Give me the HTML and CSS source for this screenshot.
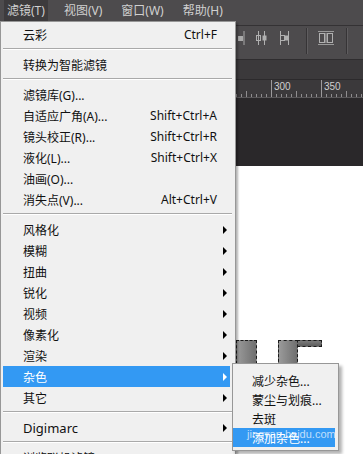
FILE: index.html
```html
<!DOCTYPE html>
<html lang="zh-CN">
<head>
  <meta charset="UTF-8">
  <title>滤镜菜单</title>
  <link rel="stylesheet" href="styles.css">
</head>
<body>
  <div class="app">
    <div class="menubar">
      <span class="mb-item active">滤镜(T)</span>
      <span class="mb-item">视图(V)</span>
      <span class="mb-item">窗口(W)</span>
      <span class="mb-item">帮助(H)</span>
    </div>

    <div class="optionsbar">
      <div class="spacer"></div>
      <svg class="tool" width="8" height="14" viewBox="0 0 8 14"><path d="M7 0v14" stroke="#a9a9a9"/><rect x="1" y="5" width="5" height="5" fill="#a9a9a9"/></svg>
      <svg class="tool" width="13" height="14" viewBox="0 0 13 14"><path d="M3.5 0v14M9.5 0v14" stroke="#b0b0b0"/><rect x="1.5" y="4.5" width="4" height="5" fill="none" stroke="#b0b0b0"/><rect x="7.5" y="4.5" width="4" height="5" fill="#b0b0b0"/></svg>
      <svg class="tool" width="13" height="14" viewBox="0 0 13 14"><path d="M2.5 0v14M10.5 0v14" stroke="#b0b0b0"/><rect x="2.5" y="4.5" width="4" height="5" fill="none" stroke="#b0b0b0"/><rect x="6.5" y="4.5" width="4" height="5" fill="#b0b0b0"/></svg>
      <span class="divider"></span>
      <svg class="tool" width="16" height="14" viewBox="0 0 16 14"><path d="M0 .5h16M0 13.5h16" stroke="#9a9a9a"/><rect x="1.5" y="2.5" width="5" height="9" fill="none" stroke="#b0b0b0"/><rect x="9.5" y="2.5" width="5" height="9" fill="none" stroke="#b0b0b0"/><path d="M8 2v10" stroke="#b0b0b0"/></svg>
      <span class="divider wide"></span>
    </div>

    <div class="tabbar"></div>

    <!-- só os números à direita do menu ficam visíveis -->
    <div class="ruler">
      <span class="seg"></span>
      <span class="seg"></span>
      <span class="seg"></span>
      <span class="seg"></span>
      <span class="seg"></span>
      <span class="seg">300</span>
      <span class="seg">350</span>
    </div>

    <div class="pasteboard"></div>

    <div class="document">
      <div class="shape s1"></div>
      <div class="shape s2"></div>
      <div class="shape s3"></div>
    </div>

    <div class="menu">
      <div class="item"><span>云彩</span><span class="key">Ctrl+F</span></div>
      <div class="sep"></div>
      <div class="item"><span>转换为智能滤镜</span></div>
      <div class="sep"></div>
      <div class="item"><span>滤镜库(G)...</span></div>
      <div class="item"><span>自适应广角(A)...</span><span class="key">Shift+Ctrl+A</span></div>
      <div class="item"><span>镜头校正(R)...</span><span class="key">Shift+Ctrl+R</span></div>
      <div class="item"><span>液化(L)...</span><span class="key">Shift+Ctrl+X</span></div>
      <div class="item"><span>油画(O)...</span></div>
      <div class="item"><span>消失点(V)...</span><span class="key">Alt+Ctrl+V</span></div>
      <div class="sep"></div>
      <div class="item sub"><span>风格化</span><i class="arrow"></i></div>
      <div class="item sub"><span>模糊</span><i class="arrow"></i></div>
      <div class="item sub"><span>扭曲</span><i class="arrow"></i></div>
      <div class="item sub"><span>锐化</span><i class="arrow"></i></div>
      <div class="item sub"><span>视频</span><i class="arrow"></i></div>
      <div class="item sub"><span>像素化</span><i class="arrow"></i></div>
      <div class="item sub"><span>渲染</span><i class="arrow"></i></div>
      <div class="item sub hover"><span>杂色</span><i class="arrow"></i></div>
      <div class="item sub"><span>其它</span><i class="arrow"></i></div>
      <div class="sep"></div>
      <div class="item sub"><span class="latin">Digimarc</span><i class="arrow"></i></div>
      <div class="sep"></div>
      <div class="item"><span>浏览联机滤镜...</span></div>
    </div>

    <div class="submenu">
      <div class="item"><span>减少杂色...</span></div>
      <div class="item"><span>蒙尘与划痕...</span></div>
      <div class="item"><span>去斑</span></div>
      <div class="item hover"><span>添加杂色...</span></div>
    </div>

    <div class="watermark">jingyan.baidu.com</div>
  </div>
</body>
</html>
```

FILE: styles.css
```css
* {
  box-sizing: border-box;
}

body {
  margin: 0;
  font-family: "Noto Sans", "Noto Sans CJK SC", sans-serif;
  font-size: 12px;
  background-color: #ffffff;
  overflow: hidden;
}

.app {
  position: relative;
  width: 363px;
  height: 454px;
  overflow: hidden;
  display: flex;
  flex-direction: column;
}

/* barra de menus do Photoshop */
.menubar {
  height: 26px;
  background-color: #4d4b4d;
  border-bottom: 1px solid #343234;
  display: flex;
  align-items: flex-start;
  gap: 13px;
  padding-left: 4px;
  color: #d0d0d0;
}

.mb-item {
  height: 21px;
  line-height: 21px;
  padding: 0 3px;
}

.mb-item.active {
  background-color: #3d3b3d;
}

.optionsbar {
  height: 34px;
  background-color: #4d4b4d;
  border-bottom: 1px solid #2f2d2f;
  display: flex;
  align-items: flex-start;
  padding-top: 5px;
}

.spacer {
  width: 237px;
}

.tool {
  margin-right: 10px;
}

.divider {
  width: 2px;
  height: 26px;
  margin: -3px 10px 0 5px;
  border-left: 1px solid #363436;
  border-right: 1px solid #5f5d5f;
}

.divider.wide {
  margin-left: 2px;
}

.tabbar {
  height: 20px;
  background-color: #3b393b;
  border-bottom: 1px solid #2c2a2c;
}

.ruler {
  height: 18px;
  background-color: #3b393b;
  border-bottom: 1px solid #5a585a;
  display: flex;
  padding-left: 21px;
}

.seg {
  position: relative;
  flex: 0 0 50px;
  border-left: 1px solid #9c9a9c;
  padding: 1px 0 0 2px;
  font-family: "Liberation Sans", sans-serif;
  font-size: 10px;
  line-height: 11px;
  color: #cfcfcf;
  background: repeating-linear-gradient(to right, transparent 0 4px, #8f8d8f 4px 5px) left bottom / 100% 3px no-repeat;
}

.seg::after {
  content: "";
  position: absolute;
  left: 24px;
  bottom: 0;
  height: 6px;
  border-left: 1px solid #8f8d8f;
}

.pasteboard {
  height: 68px;
  background-color: #2a282a;
}

.document {
  position: relative;
  flex: 1;
  background-color: #ffffff;
}

.shape {
  position: absolute;
  border: 1px dashed #1a1a1a;
  background: linear-gradient(to right, #9a9a9a, #6f6f6f);
}

.s1 {
  left: 236px;
  top: 174px;
  width: 21px;
  height: 40px;
}

.s2 {
  left: 278px;
  top: 174px;
  width: 20px;
  height: 36px;
}

.s3 {
  left: 297px;
  top: 174px;
  width: 25px;
  height: 7px;
  background: linear-gradient(to bottom, #7a7a7a, #5c5c5c);
}

/* menu suspenso */
.menu {
  position: absolute;
  left: 0;
  top: 21px;
  width: 236px;
  height: 460px;
  background-color: #f0f0f0;
  border: 1px solid #979797;
  padding-top: 2px;
  box-shadow: 2px 2px 2px rgba(0, 0, 0, 0.3);
  color: #111111;
}

.item {
  height: 21px;
  display: flex;
  align-items: center;
  margin: 0 5px 0 2px;
  padding: 0 13px 0 20px;
}

.item.sub {
  padding-right: 3px;
}

.key {
  margin-left: auto;
}

.latin {
  font-size: 13px;
}

.arrow {
  margin-left: auto;
  width: 0;
  height: 0;
  border-top: 4px solid transparent;
  border-bottom: 4px solid transparent;
  border-left: 4px solid #000000;
}

.item.hover {
  background-color: #3399f3;
  color: #ffffff;
}

.item.hover .arrow {
  border-left-color: #ffffff;
}

.sep {
  margin: 3px 3px 4px 2px;
  border-top: 1px solid #a9a9a9;
  border-bottom: 1px solid #ffffff;
}

.submenu {
  position: absolute;
  left: 232px;
  top: 363px;
  width: 107px;
  height: 88px;
  background-color: #f0f0f0;
  border: 1px solid #979797;
  padding-top: 7px;
  box-shadow: 3px 3px 3px rgba(0, 0, 0, 0.3);
  color: #111111;
}

.submenu .item {
  height: 19px;
  margin: 0 3px 0 0;
  padding-left: 19px;
}

.watermark {
  position: absolute;
  left: 247px;
  top: 428px;
  font-family: "Liberation Sans", sans-serif;
  font-size: 11px;
  color: rgba(255, 255, 255, 0.7);
}
```
